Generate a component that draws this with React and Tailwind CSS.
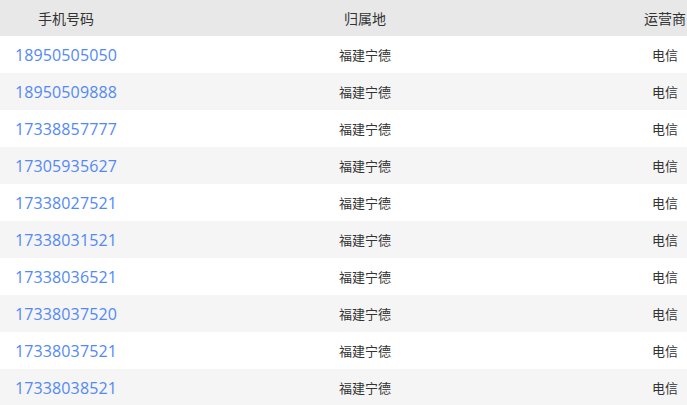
const rows = [
  "18950505050",
  "18950509888",
  "17338857777",
  "17305935627",
  "17338027521",
  "17338031521",
  "17338036521",
  "17338037520",
  "17338037521",
  "17338038521",
];

const App = () => {
  return (
    <div
      className="w-[687px] h-[405px] overflow-hidden bg-white"
      style={{ fontFamily: '"Noto Sans CJK SC", "Noto Sans", sans-serif' }}
    >
      <div className="w-[732px]">
        <div className="grid grid-cols-[132px_466px_134px] h-[36px] items-center bg-[#e8e8e8] text-[14px] text-[#333]">
          <div className="text-center">手机号码</div>
          <div className="text-center">归属地</div>
          <div className="text-center">运营商</div>
        </div>
        {rows.map((phone, i) => (
          <div
            key={phone}
            className={`grid grid-cols-[132px_466px_134px] h-[37px] items-center ${
              i % 2 === 1 ? "bg-[#f5f5f5]" : "bg-white"
            }`}
          >
            <div className="pl-[15px] font-['Open_Sans',sans-serif] text-[16px] tracking-[0.12px] text-[#5289f7] whitespace-nowrap">
              {phone}
            </div>
            <div className="text-center text-[13px] text-[#333]">福建宁德</div>
            <div className="text-center text-[13px] text-[#333]">电信</div>
          </div>
        ))}
      </div>
    </div>
  );
};

export default App;
